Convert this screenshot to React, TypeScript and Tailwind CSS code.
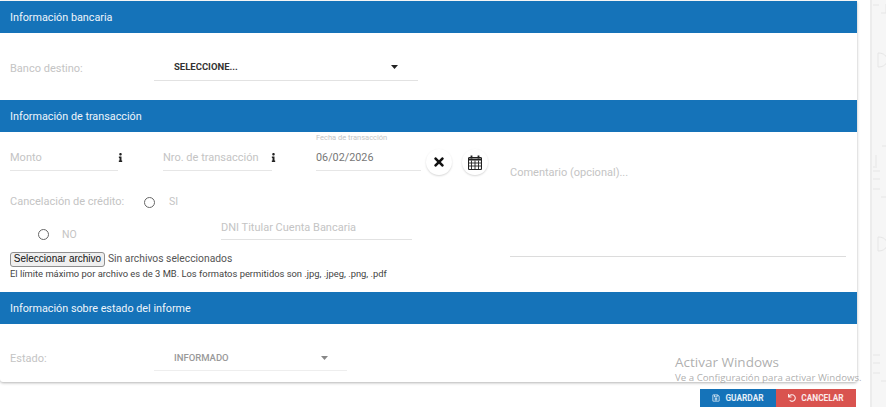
import React from 'react';
import { FaInfo, FaTimes, FaRegSave, FaUndo } from 'react-icons/fa';

const font = { fontFamily: 'Roboto, sans-serif' };

const SectionHeader = ({ title }: { title: string }) => (
  <div className="h-[32px] bg-[#1573b9] flex items-center pl-[10px] pt-[2px] text-[10.8px] text-[#eef5fb]">{title}</div>
);

const Caret = ({ color }: { color: string }) => (
  <svg width="7" height="4" viewBox="0 0 7 4"><path d="M0 0h7L3.5 4z" fill={color} /></svg>
);

const Radio = () => <span className="w-[11px] h-[11px] rounded-full border-[1.5px] border-[#666] bg-white shrink-0" />;

const CalendarIcon = () => (
  <svg width="14" height="15" viewBox="0 0 14 15" fill="none" stroke="#222" strokeWidth="1.1">
    <rect x="0.5" y="2.5" width="13" height="12" rx="1" />
    <path d="M0.5 4.5h13" strokeWidth="2" />
    <path d="M0.5 8h13M0.5 11h13M3.5 5.5v9M7 5.5v9M10.5 5.5v9" strokeWidth="0.9" />
    <path d="M3.5 0.5v3M10.5 0.5v3" strokeWidth="1.8" />
  </svg>
);

const RoundButton = ({ children }: { children: React.ReactNode }) => (
  <button className="w-[26px] h-[26px] rounded-full bg-white shadow-[0_1px_2px_rgba(0,0,0,0.16)] flex items-center justify-center">
    {children}
  </button>
);

const SideStrip = () => (
  <svg width="16" height="407" viewBox="0 0 16 407" fill="none" stroke="#e6e6e6" strokeWidth="1">
    <path d="M1 5h6M9 13h5v-9M10 146h6M4 155v11M1 167h4M1 171h7M1 179h7M1 189h7M9 197h6v-5M1 355h7M1 363h7M1 373h7M9 381h6v-5" />
    <path d="M6 53c6 0 9 3 9 7s-3 7-9 7zM6 237c6 0 9 3 9 7s-3 7-9 7z" />
  </svg>
);

export default function App() {
  return (
    <div className="relative w-[886px] h-[407px] overflow-hidden bg-white flex" style={font}>
      <div className="w-[857px] pt-px shrink-0">
        <div className="rounded-b-[3px] shadow-[0_1px_3px_rgba(0,0,0,0.3)]">
          <SectionHeader title="Información bancaria" />
          <div className="h-[67px] flex items-start pl-[10px]">
            <span className="mt-[28px] w-[144px] text-[11px] text-[#c4c4c4]">Banco destino:</span>
            <div className="mt-[21px] w-[264px] h-[27px] border-b border-[#e2e2e2] flex items-center justify-between pl-[20px] pr-[20px]">
              <span className="text-[9.5px] font-bold text-[#333]">SELECCIONE...</span>
              <Caret color="#222" />
            </div>
          </div>

          <SectionHeader title="Información de transacción" />
          <div className="h-[160px] flex pl-[10px]">
            <div className="w-[500px] shrink-0 flex flex-col">
              <div className="flex items-start h-[43px]">
                <div className="mt-[12px] w-[108px] h-[27px] border-b border-[#e6e6e6] flex items-center justify-between pt-[3px]">
                  <span className="text-[11px] text-[#c4c4c4]">Monto</span>
                  <FaInfo className="text-[#222] text-[9px] mr-[-7px] mb-[3px]" />
                </div>
                <div className="ml-[45px] mt-[12px] w-[109px] h-[27px] border-b border-[#e6e6e6] flex items-center justify-between pt-[3px]">
                  <span className="text-[11px] text-[#c4c4c4]">Nro. de transacción</span>
                  <FaInfo className="text-[#222] text-[9px] mr-[-6px] mb-[3px]" />
                </div>
                <div className="ml-[44px] w-[105px] flex flex-col">
                  <span className="text-[7.5px] leading-[10px] mt-px text-[#c4c4c4]">Fecha de transacción</span>
                  <div className="h-[28px] border-b border-[#e6e6e6] flex items-center pt-[4px] text-[10.8px] text-[#777]">06/02/2026</div>
                </div>
                <div className="ml-[5px] mt-[17px] flex gap-[10px]">
                  <RoundButton><FaTimes className="text-[#111] text-[14px]" /></RoundButton>
                  <RoundButton><CalendarIcon /></RoundButton>
                </div>
              </div>
              <div className="flex items-center mt-[20px] h-[14px]">
                <span className="w-[134px] text-[11px] text-[#c4c4c4]">Cancelación de crédito:</span>
                <Radio />
                <span className="ml-[14px] text-[10.5px] text-[#c4c4c4]">SI</span>
              </div>
              <div className="flex items-start mt-[9px] h-[22px]">
                <div className="flex items-center ml-[28px] mt-[9px] w-[183px]">
                  <Radio />
                  <span className="ml-[13px] text-[10.5px] text-[#c4c4c4]">NO</span>
                </div>
                <div className="w-[191px] h-[22px] border-b border-[#e2e2e2] flex items-center text-[11px] text-[#c4c4c4]">DNI Titular Cuenta Bancaria</div>
              </div>
              <div className="flex items-center mt-[11px] h-[16px]">
                <button className="h-[15px] w-[95px] bg-[#efefef] border border-[#8f8f8f] rounded-[3px] text-[10px] leading-none text-[#111]" style={{ fontFamily: '"Liberation Sans", sans-serif' }}>Seleccionar archivo</button>
                <span className="ml-[3px] text-[10.3px] text-[#555]">Sin archivos seleccionados</span>
              </div>
              <p className="mt-px text-[9.4px] leading-[12px] text-[#444] whitespace-nowrap">El límite máximo por archivo es de 3 MB. Los formatos permitidos son .jpg, .jpeg, .png, .pdf</p>
            </div>
            <div className="w-[336px] h-[125px] border-b border-[#dcdcdc] pt-[33px] text-[11px] text-[#c4c4c4]">Comentario (opcional)...</div>
          </div>

          <SectionHeader title="Información sobre estado del informe" />
          <div className="h-[58px] flex items-start pl-[10px]">
            <span className="mt-[27px] w-[144px] text-[11px] text-[#c4c4c4]">Estado:</span>
            <div className="mt-[20px] w-[193px] h-[27px] border-b border-[#eeeeee] flex items-center justify-between pl-[20px] pr-[19px] pt-[2px]">
              <span className="text-[9.5px] font-medium text-[#999]">INFORMADO</span>
              <Caret color="#888" />
            </div>
          </div>
        </div>
        <div className="mt-[7px] flex justify-end">
          <button className="w-[76px] h-[18px] bg-[#1573b9] text-[#e4eff8] text-[8.3px] font-bold flex items-center justify-center gap-[5px]">
            <FaRegSave className="text-[8px]" />GUARDAR
          </button>
          <button className="w-[80px] h-[18px] bg-[#d9534f] text-[#fbeaea] text-[8.3px] font-bold flex items-center justify-center gap-[5px] mr-[1px]">
            <FaUndo className="text-[8px]" />CANCELAR
          </button>
        </div>
      </div>
      <div className="ml-[13px] w-[16px] h-full bg-[#f6f6f6] border-l-2 border-[#ececec] overflow-hidden">
        <SideStrip />
      </div>
      <div className="absolute left-[675px] top-[353px] text-[#9a9a9a]/80 pointer-events-none" style={{ fontFamily: '"Open Sans", sans-serif' }}>
        <div className="text-[13.5px] leading-[18px]">Activar Windows</div>
        <div className="text-[9.7px] leading-[13px] whitespace-nowrap">Ve a Configuración para activar Windows.</div>
      </div>
    </div>
  );
}
